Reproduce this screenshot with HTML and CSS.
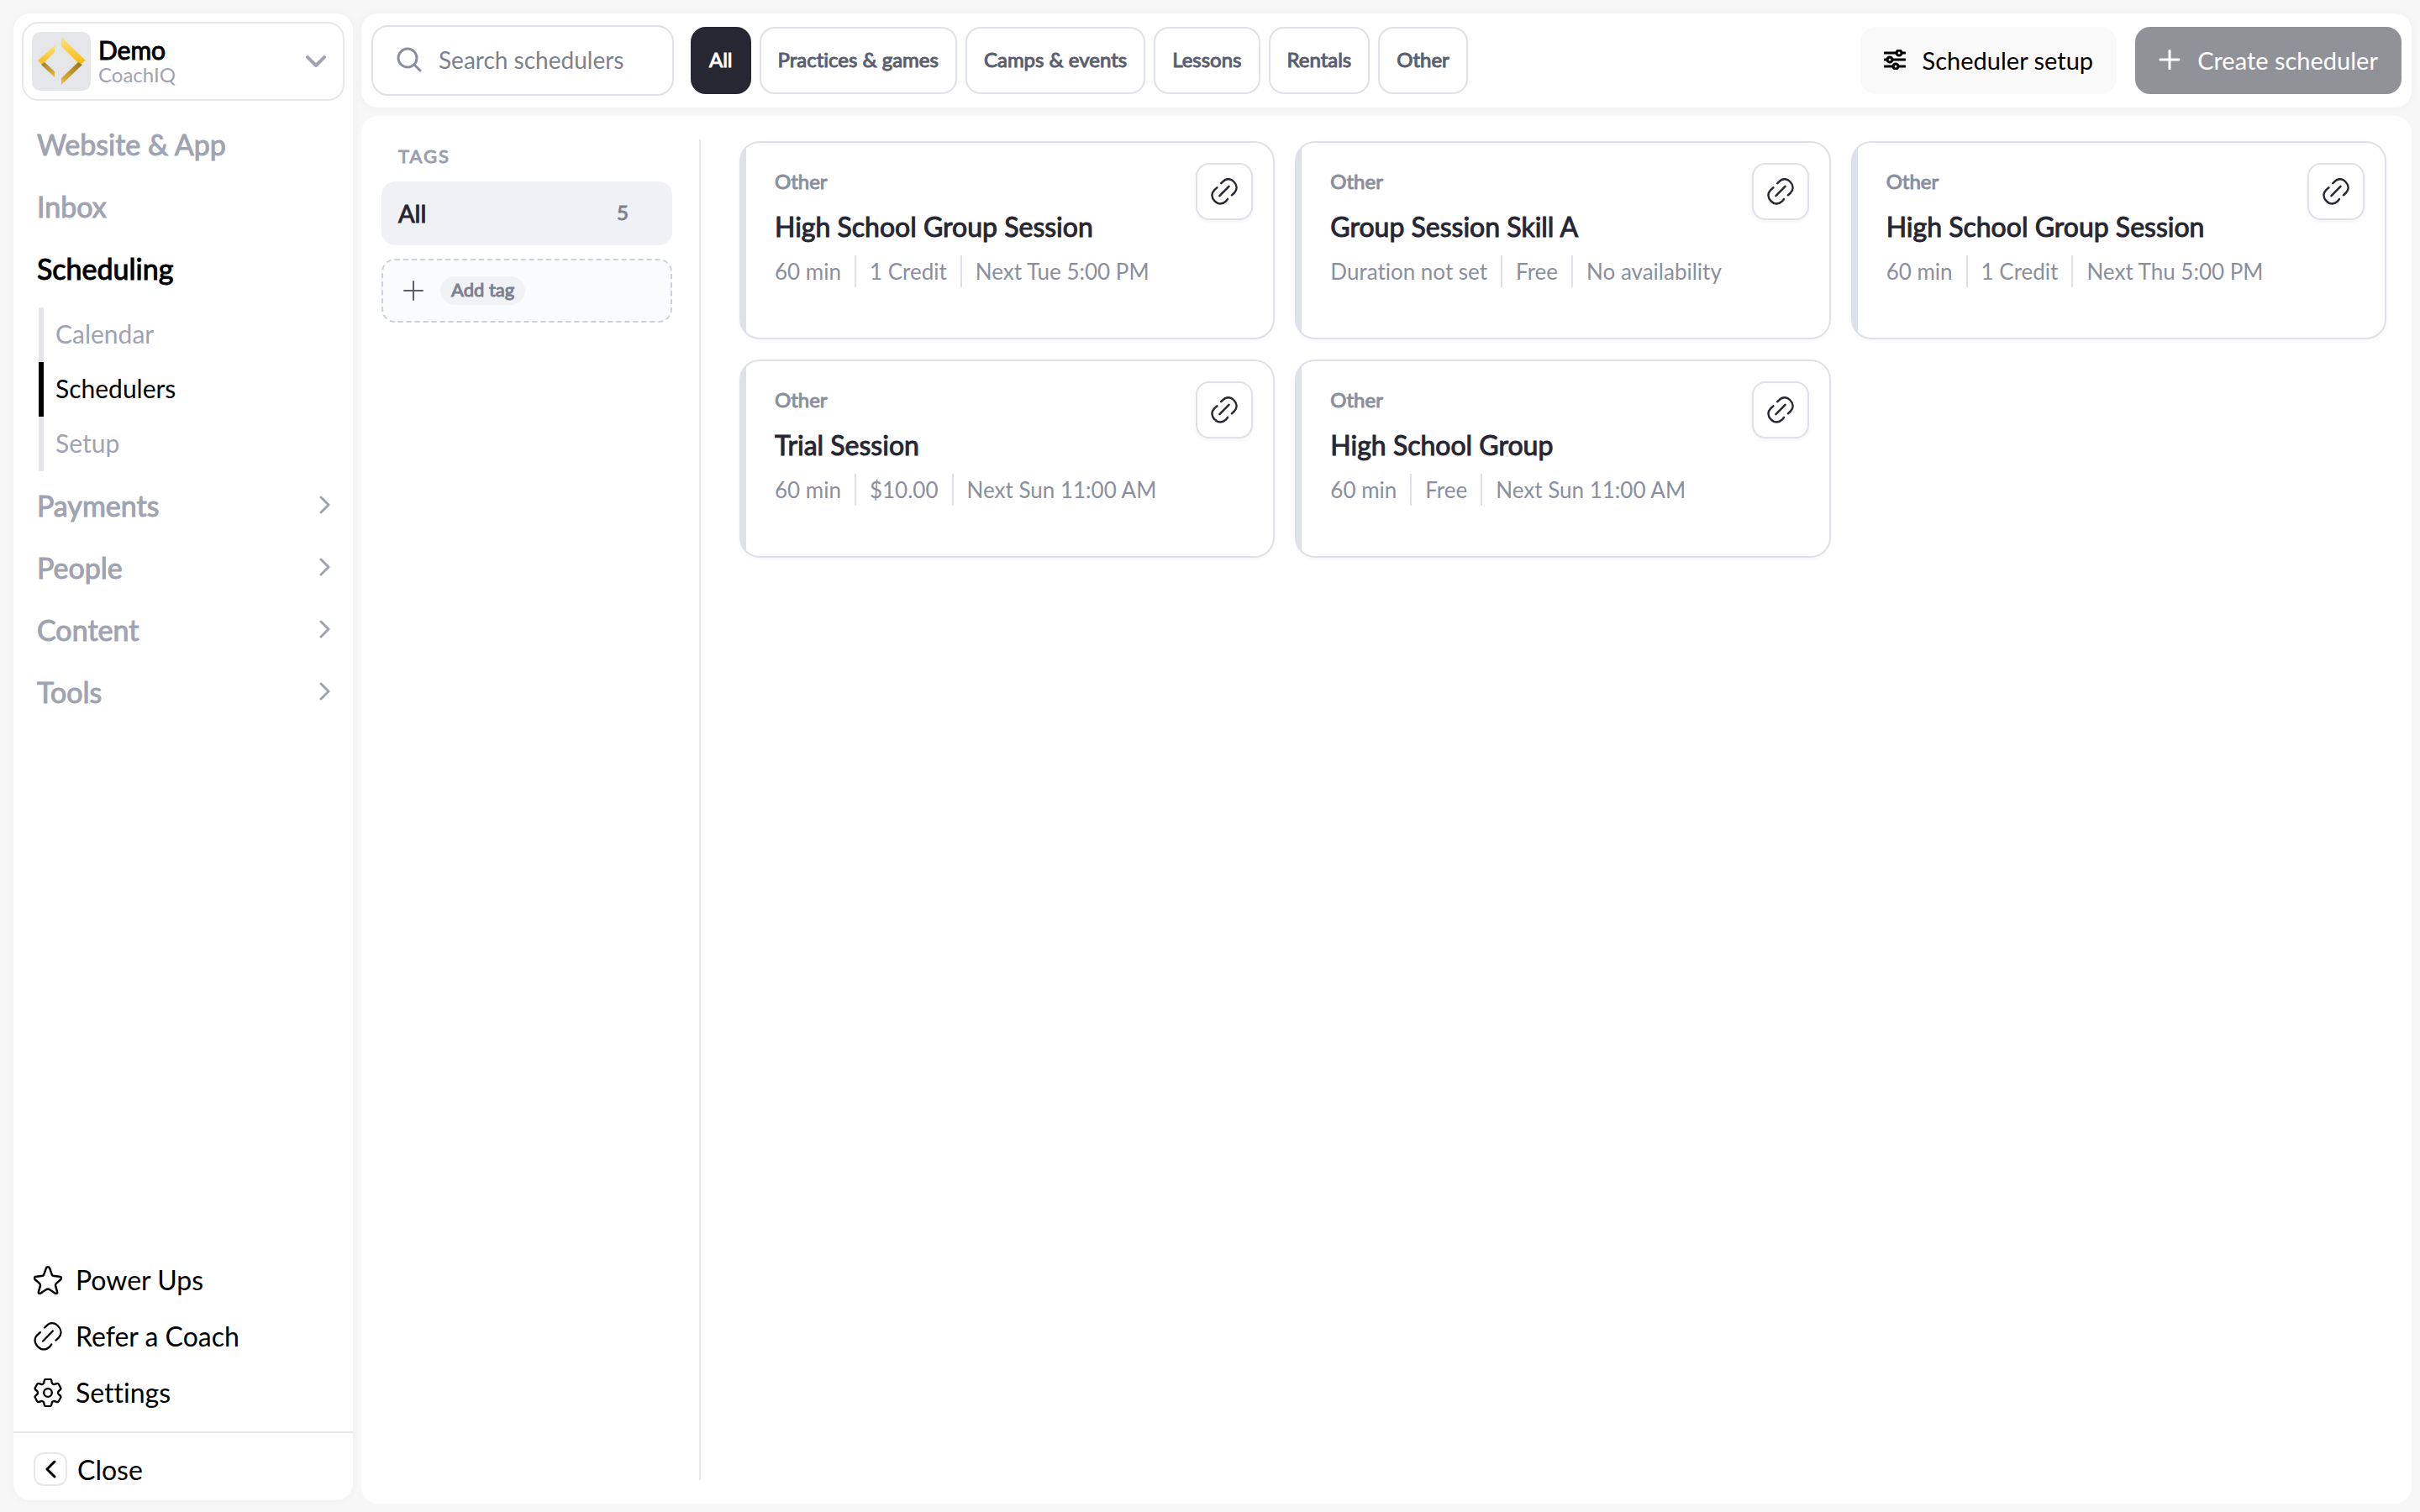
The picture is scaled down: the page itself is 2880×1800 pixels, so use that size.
FILE: index.html
```html
<!DOCTYPE html>
<html lang="en">
<head>
<meta charset="utf-8">
<title>Schedulers</title>
<link rel="stylesheet" href="styles.css">
</head>
<body>
<svg class="sprite" aria-hidden="true">
  <symbol id="link" viewBox="0 0 104 104"><path d="M40 20l6-6C58 1 75 0 88 13C102 27 103 44 91 57L81 66M24 37L14 46C1 59 2 76 15 89C29 103 46 102 58 90L65 81M34 69L70 32"/></symbol>
  <symbol id="star" viewBox="0 0 96 96"><path d="M42 8C44 2 52 2 54 8L61 28C62 32 65 34 69 34L87 36C94 37 96 41 91 46L76 59C73 62 73 65 74 69L79 86C81 93 77 95 71 91L54 80C50 77 46 77 42 80L25 91C19 95 15 93 17 86L22 69C23 65 23 62 20 59L5 46C0 41 2 37 9 36L27 34C31 34 34 32 35 28Z"/></symbol>
  <symbol id="gear" viewBox="2.5 2.5 19 19"><path d="M9.594 3.94c.09-.542.56-.94 1.11-.94h2.593c.55 0 1.02.398 1.11.94l.213 1.281c.063.374.313.686.645.87.074.04.147.083.22.127.325.196.72.257 1.075.124l1.217-.456a1.125 1.125 0 0 1 1.37.49l1.296 2.247a1.125 1.125 0 0 1-.26 1.431l-1.003.827c-.293.241-.438.613-.43.992a7.723 7.723 0 0 1 0 .255c-.008.378.137.75.43.991l1.004.827c.424.35.534.955.26 1.43l-1.298 2.247a1.125 1.125 0 0 1-1.369.491l-1.217-.456c-.355-.133-.75-.072-1.076.124a6.47 6.47 0 0 1-.22.128c-.331.183-.581.495-.644.869l-.213 1.281c-.09.543-.56.94-1.11.94h-2.594c-.55 0-1.019-.398-1.11-.94l-.213-1.281c-.062-.374-.312-.686-.644-.87a6.52 6.52 0 0 1-.22-.127c-.325-.196-.72-.257-1.076-.124l-1.217.456a1.125 1.125 0 0 1-1.369-.49l-1.297-2.247a1.125 1.125 0 0 1 .26-1.431l1.004-.827c.292-.24.437-.613.43-.991a6.932 6.932 0 0 1 0-.255c.007-.38-.138-.751-.43-.992l-1.004-.827a1.125 1.125 0 0 1-.26-1.43l1.297-2.247a1.125 1.125 0 0 1 1.37-.491l1.216.456c.356.133.751.072 1.076-.124.072-.044.146-.086.22-.128.332-.183.582-.495.644-.869l.214-1.28Z"/><circle cx="12" cy="12" r="2.7"/></symbol>
  <symbol id="chevron" viewBox="0 0 14 22"><path d="M2 2L11 11L2 20"/></symbol>
  <symbol id="plus" viewBox="0 0 24 24"><path d="M12 1V23M1 12H23"/></symbol>
</svg>
<aside class="sidebar">
  <button class="account" type="button">
    <svg class="logo" viewBox="0 0 70 70" aria-hidden="true">
      <defs>
        <linearGradient id="gold" x1="0" y1="0" x2="0" y2="1"><stop offset="0" stop-color="#ffe27a"/><stop offset="1" stop-color="#f7b80c"/></linearGradient>
        <linearGradient id="bronzeLeft" x1="0" y1="0" x2="1" y2="1"><stop offset="0" stop-color="#a07a20"/><stop offset="1" stop-color="#e8b93c"/></linearGradient>
        <linearGradient id="bronzeRight" x1="1" y1="0" x2="0" y2="1"><stop offset="0" stop-color="#94701c"/><stop offset="1" stop-color="#f0bd38"/></linearGradient>
      </defs>
      <path fill="url(#gold)" d="M27 16V24L12 39L7 34Z"/>
      <path fill="url(#bronzeLeft)" d="M15 36L27 47V54L11 39Z"/>
      <path fill="url(#gold)" d="M35 6V17L57 39L64 34Z"/>
      <path fill="url(#bronzeRight)" d="M55 36L60 39L35 63V55Z"/>
    </svg>
    <span class="account-text"><strong class="account-name">Demo</strong><span class="account-org">CoachIQ</span></span>
    <svg class="account-chevron" viewBox="0 0 26 16" aria-hidden="true"><path d="M3 3L13 13L23 3"/></svg>
  </button>
  <nav class="nav" aria-label="Main">
    <a class="nav-item" href="#">Website &amp; App</a>
    <a class="nav-item" href="#">Inbox</a>
    <a class="nav-item nav-item-active" href="#">Scheduling</a>
    <div class="subnav">
      <a class="subnav-item" href="#">Calendar</a>
      <a class="subnav-item subnav-item-active" href="#">Schedulers</a>
      <a class="subnav-item" href="#">Setup</a>
    </div>
    <a class="nav-item" href="#">Payments<svg class="nav-chevron"><use href="#chevron"/></svg></a>
    <a class="nav-item" href="#">People<svg class="nav-chevron"><use href="#chevron"/></svg></a>
    <a class="nav-item" href="#">Content<svg class="nav-chevron"><use href="#chevron"/></svg></a>
    <a class="nav-item" href="#">Tools<svg class="nav-chevron"><use href="#chevron"/></svg></a>
  </nav>
  <nav class="utility" aria-label="Utility">
    <a class="utility-item" href="#"><svg class="utility-icon"><use href="#star"/></svg>Power Ups</a>
    <a class="utility-item" href="#"><svg class="utility-icon"><use href="#link"/></svg>Refer a Coach</a>
    <a class="utility-item" href="#"><svg class="utility-icon utility-gear"><use href="#gear"/></svg>Settings</a>
  </nav>
  <button class="close" type="button"><span class="close-box"><svg class="close-icon" viewBox="0 0 14 22"><path d="M12 2L3 11L12 20"/></svg></span>Close</button>
</aside>
<div class="content">
  <header class="toolbar">
    <label class="search">
      <svg class="search-icon" viewBox="0 0 30 30" aria-hidden="true"><circle cx="13" cy="13" r="11"/><path d="M21 21L28 28"/></svg>
      <input class="search-input" type="text" placeholder="Search schedulers" aria-label="Search schedulers">
    </label>
    <div class="filters">
      <button class="filter filter-active" type="button">All</button>
      <button class="filter" type="button">Practices &amp; games</button>
      <button class="filter" type="button">Camps &amp; events</button>
      <button class="filter" type="button">Lessons</button>
      <button class="filter" type="button">Rentals</button>
      <button class="filter" type="button">Other</button>
    </div>
    <div class="actions">
      <button class="action" type="button"><svg class="action-icon" viewBox="0 0 26 24" aria-hidden="true"><path d="M1 4H15M22 4H25M1 12H4M11 12H25M1 20H11M18 20H25"/><circle cx="18" cy="4" r="3"/><circle cx="7" cy="12" r="3"/><circle cx="14" cy="20" r="3"/></svg>Scheduler setup</button>
      <button class="action action-primary" type="button"><svg class="action-icon"><use href="#plus"/></svg>Create scheduler</button>
    </div>
  </header>
  <main class="panel">
    <section class="tags">
      <h2 class="tags-title">TAGS</h2>
      <button class="tag" type="button">All<span class="tag-count">5</span></button>
      <button class="tag tag-add" type="button"><svg class="tag-plus"><use href="#plus"/></svg><span class="tag-pill">Add tag</span></button>
    </section>
    <section class="cards">
      <article class="card">
        <div class="card-body"><p class="card-type">Other</p><h3 class="card-title">High School Group Session</h3>
        <ul class="meta"><li>60 min</li><li>1 Credit</li><li>Next Tue 5:00 PM</li></ul></div>
        <button class="card-link" type="button" aria-label="Copy link"><svg class="card-icon"><use href="#link"/></svg></button>
      </article>
      <article class="card">
        <div class="card-body"><p class="card-type">Other</p><h3 class="card-title">Group Session Skill A</h3>
        <ul class="meta"><li>Duration not set</li><li>Free</li><li>No availability</li></ul></div>
        <button class="card-link" type="button" aria-label="Copy link"><svg class="card-icon"><use href="#link"/></svg></button>
      </article>
      <article class="card">
        <div class="card-body"><p class="card-type">Other</p><h3 class="card-title">High School Group Session</h3>
        <ul class="meta"><li>60 min</li><li>1 Credit</li><li>Next Thu 5:00 PM</li></ul></div>
        <button class="card-link" type="button" aria-label="Copy link"><svg class="card-icon"><use href="#link"/></svg></button>
      </article>
      <article class="card">
        <div class="card-body"><p class="card-type">Other</p><h3 class="card-title">Trial Session</h3>
        <ul class="meta"><li>60 min</li><li>$10.00</li><li>Next Sun 11:00 AM</li></ul></div>
        <button class="card-link" type="button" aria-label="Copy link"><svg class="card-icon"><use href="#link"/></svg></button>
      </article>
      <article class="card">
        <div class="card-body"><p class="card-type">Other</p><h3 class="card-title">High School Group</h3>
        <ul class="meta"><li>60 min</li><li>Free</li><li>Next Sun 11:00 AM</li></ul></div>
        <button class="card-link" type="button" aria-label="Copy link"><svg class="card-icon"><use href="#link"/></svg></button>
      </article>
    </section>
  </main>
</div>
</body>
</html>
```
FILE: styles.css
```css
* { box-sizing: border-box; margin: 0; padding: 0; }

body {
  display: flex;
  gap: 10px;
  min-height: 100vh;
  padding: 16px 10px 10px 16px;
  background: #f7f7f7;
  font-family: Lato, sans-serif;
  font-size: 30px;
  font-variant-ligatures: none;
  color: #000;
}

a { color: inherit; text-decoration: none; }
button { font: inherit; font-variant-ligatures: none; color: inherit; border: 0; background: none; text-align: left; cursor: pointer; }
svg { display: block; flex: none; fill: none; stroke: currentColor; stroke-linecap: round; stroke-linejoin: round; }
ul { list-style: none; }
.sprite { position: absolute; width: 0; height: 0; }

/* Semibold: the regular cut thickened with an outline */
.account-name, .nav-item, .filter, .tags-title, .tag, .card-type, .card-title {
  font-weight: 400;
  -webkit-text-stroke: 1px currentColor;
}

/* Sidebar */
.sidebar {
  display: flex;
  flex: none;
  flex-direction: column;
  width: 404px;
  margin-bottom: 4px;
  border-radius: 20px;
  background: #fff;
  box-shadow: 0 0 12px rgba(0, 0, 0, 0.04);
}

.account {
  display: flex;
  align-items: center;
  gap: 9px;
  margin: 10px 10px 16px;
  padding: 10px;
  border: 2px solid #e8e8ea;
  border-radius: 20px;
}
.logo { width: 70px; height: 70px; border-radius: 10px; background: #e5e6ea; stroke: none; }
.account-text { display: flex; flex: 1; flex-direction: column; padding-bottom: 2px; }
.account-name { font-size: 30px; line-height: 34px; }
.account-org { font-size: 24px; line-height: 26px; color: #a0a3b1; }
.account-chevron { width: 26px; height: 16px; margin-right: 9px; color: #a0a3b1; stroke-width: 4; }

.nav { display: flex; flex: 1; flex-direction: column; padding: 0 26px 0 28px; }
.nav-item {
  display: flex;
  align-items: center;
  justify-content: space-between;
  height: 74px;
  padding-bottom: 4px;
  font-size: 34px;
  color: #a0a3b1;
}
.nav-item-active { color: #000; }
.nav-chevron { width: 14px; height: 22px; stroke-width: 3; }

.subnav { margin: 8px 0 5px 2px; }
.subnav-item {
  display: flex;
  align-items: center;
  height: 65px;
  padding: 0 0 3px 14px;
  border-left: 6px solid #e5e6ea;
  font-size: 30px;
  color: #a0a3b1;
}
.subnav-item-active { border-color: #000; color: #000; }

.utility { display: flex; flex-direction: column; padding: 0 24px 13px; }
.utility-item { display: flex; align-items: center; gap: 16px; height: 67px; font-size: 32px; }
.utility-icon { width: 34px; height: 34px; stroke-width: 7; }
.utility-gear { stroke-width: 1.3; }

.close {
  display: flex;
  align-items: center;
  gap: 12px;
  height: 82px;
  padding: 6px 24px 0;
  border-top: 2px solid #e8e8ea;
  font-size: 32px;
}
.close-box { display: grid; place-items: center; width: 40px; height: 40px; border: 2px solid #e8e8ea; border-radius: 12px; }
.close-icon { width: 14px; height: 22px; stroke-width: 3; }

/* Toolbar */
.content { display: flex; flex: 1; flex-direction: column; gap: 10px; min-width: 0; }

.toolbar {
  display: flex;
  align-items: center;
  gap: 20px;
  height: 112px;
  padding: 0 12px;
  border-radius: 20px;
  background: #fff;
  box-shadow: 0 0 12px rgba(0, 0, 0, 0.04);
}
.search {
  display: flex;
  align-items: center;
  gap: 20px;
  width: 360px;
  height: 84px;
  padding: 0 28px 2px;
  border: 2px solid #dfe1e8;
  border-radius: 20px;
  color: #8a8f9e;
}
.search-icon { width: 30px; height: 30px; stroke-width: 3; }
.search-input { flex: 1; min-width: 0; border: 0; outline: 0; background: none; font: inherit; font-size: 28px; color: #262732; }
.search-input::placeholder { color: #7c8190; opacity: 1; }

.filters { display: flex; gap: 10px; }
.filter {
  height: 80px;
  padding: 0 20px 3px;
  border: 2px solid #dfe1e8;
  border-radius: 18px;
  font-size: 24px;
  color: #5a5e6e;
  white-space: nowrap;
}
.filter-active { border-color: #262732; background: #262732; color: #fff; }

.actions { display: flex; gap: 22px; margin-left: auto; }
.action {
  display: flex;
  align-items: center;
  gap: 20px;
  height: 80px;
  padding: 0 28px 2px;
  border-radius: 18px;
  background: #f9f9f9;
  font-size: 29px;
  white-space: nowrap;
}
.action-icon { width: 26px; height: 24px; stroke-width: 3; }
.action-primary { background: #919298; color: #fff; }

/* Panel */
.panel {
  display: flex;
  flex: 1;
  border-radius: 20px;
  background: #fff;
  padding: 28px 30px 28px 24px;
}
.tags {
  display: flex;
  flex: none;
  flex-direction: column;
  gap: 16px;
  width: 380px;
  padding-right: 32px;
  border-right: 2px solid #e8e9ec;
}
.tags-title { padding: 6px 20px 0; font-size: 22px; line-height: 28px; letter-spacing: 2px; color: #9a9eac; }
.tag {
  display: flex;
  align-items: center;
  height: 76px;
  padding: 0 20px 2px;
  border-radius: 16px;
  background: #f0f1f5;
  font-size: 29px;
  color: #262732;
}
.tag-count { margin-left: auto; padding: 0 32px 2px; font-size: 24px; color: #7c8190; }
.tag-add { gap: 20px; padding: 0 24px; border: 2px dashed #cdd0d9; background: #fafbfd; }
.tag-plus { width: 24px; height: 24px; color: #5a5e6e; stroke-width: 2; }
.tag-pill { padding: 0 13px 2px; border-radius: 17px; background: #f1f2f5; font-size: 22px; line-height: 32px; color: #7c8190; }

.cards {
  display: grid;
  flex: 1;
  grid-template-columns: repeat(3, 1fr);
  align-content: start;
  gap: 24px;
  padding: 2px 0 0 46px;
}
.card {
  display: flex;
  align-items: flex-start;
  justify-content: space-between;
  height: 236px;
  padding: 24px 24px 0 40px;
  border: 2px solid #dfe1e8;
  border-radius: 24px;
  background: linear-gradient(to right, #dfe1e8 6px, #fff 6px);
  box-shadow: 0 2px 4px rgba(38, 39, 50, 0.03);
}
.card-type { padding-top: 4px; font-size: 24px; line-height: 36px; color: #8a8f9e; }
.card-title { padding-top: 10px; font-size: 32px; line-height: 52px; color: #262732; }
.meta { display: flex; padding-top: 8px; font-size: 26px; line-height: 38px; color: #8a8f9e; }
.meta li + li { margin-left: 16px; padding-left: 16px; border-left: 2px solid #dfe1e8; }
.card-link {
  display: grid;
  flex: none;
  place-items: center;
  width: 68px;
  height: 68px;
  border: 2px solid #dfe1e8;
  border-radius: 16px;
  color: #262732;
  box-shadow: 0 2px 4px rgba(38, 39, 50, 0.06);
}
.card-icon { width: 32px; height: 32px; stroke-width: 8; }
```
